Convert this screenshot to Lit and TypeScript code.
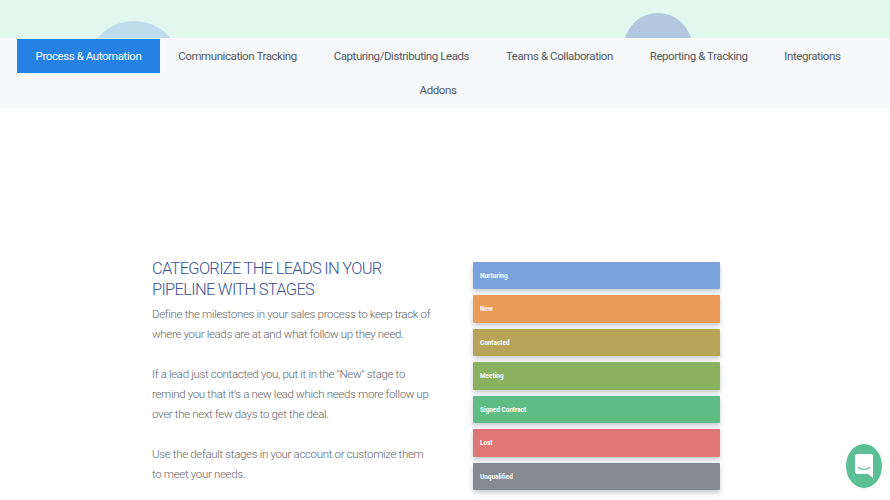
import { LitElement, html, css } from "lit";
import { customElement } from "lit/decorators.js";

const TABS = [
  "Process & Automation",
  "Communication Tracking",
  "Capturing/Distributing Leads",
  "Teams & Collaboration",
  "Reporting & Tracking",
  "Integrations",
  "Addons",
];
const STAGES: [string, string][] = [
  ["Nurturing", "#7aa3dc"],
  ["New", "#e99b57"],
  ["Contacted", "#b7a458"],
  ["Meeting", "#8ab15f"],
  ["Signed Contract", "#60bc85"],
  ["Lost", "#df7777"],
  ["Unqualified", "#848a8e"],
];

@customElement("app-root")
export class AppRoot extends LitElement {
  static styles = css`
    :host {
      display: block;
      height: 500px;
      overflow: hidden;
      position: relative;
      background: #fff;
      font-family: Roboto, "Liberation Sans", sans-serif;
    }
    .hero {
      height: 38px;
      background: #e2f8ee;
      position: relative;
      overflow: hidden;
    }
    .circle {
      position: absolute;
      border-radius: 50%;
    }
    .c1 {
      left: 87px;
      top: 21px;
      width: 94px;
      height: 94px;
      background: #bedcec;
    }
    .c2 {
      left: 624px;
      top: 13px;
      width: 68px;
      height: 68px;
      background: #b2c7e0;
    }
    nav {
      background: #f6f8fa;
      height: 70px;
      padding: 1px 30px 0 16px;
      box-sizing: border-box;
      display: flex;
      flex-wrap: wrap;
      justify-content: center;
      align-content: flex-start;
    }
    .tab {
      height: 34px;
      line-height: 34px;
      padding: 0 18.4px;
      font-size: 11.5px;
      letter-spacing: -0.42px;
      color: #53595f;
      white-space: nowrap;
    }
    .tab.active {
      background: #2581e3;
      color: #fff;
    }
    .tab.last {
      height: 35px;
      line-height: 35px;
    }
    .content {
      display: flex;
      align-items: flex-start;
      gap: 39px;
      padding: 150px 0 0 152px;
    }
    .text {
      width: 282px;
      flex: none;
    }
    h2 {
      margin: 0;
      font-size: 16.5px;
      line-height: 21px;
      font-weight: 300;
      letter-spacing: -0.72px;
      color: #3b5594;
      text-transform: uppercase;
    }
    p {
      margin: 4px 0 20px;
      font-size: 11.5px;
      font-weight: 300;
      letter-spacing: -0.33px;
      line-height: 20px;
      color: #5f656b;
    }
    .stages {
      width: 247px;
      display: flex;
      flex-direction: column;
      gap: 6px;
      padding-top: 3.7px;
    }
    .stage {
      height: 27.5px;
      line-height: 28.5px;
      padding-left: 7px;
      color: #fff;
      font-size: 6.4px;
      font-weight: 700;
      border-radius: 1px;
      box-shadow: 0 3px 5px rgba(70, 90, 110, 0.3);
    }
    .chat {
      position: absolute;
      left: 846px;
      top: 444px;
      width: 36px;
      height: 44px;
      border-radius: 50%;
      background: #5cbf95;
      display: flex;
      align-items: center;
      justify-content: center;
      box-shadow: 0 1px 6px rgba(0, 0, 0, 0.06);
    }
    .chat svg {
      display: block;
    }
  `;

  render() {
    return html`
      <div class="hero">
        <div class="circle c1"></div>
        <div class="circle c2"></div>
      </div>
      <nav>
        ${TABS.map(
          (t, i) =>
            html`<div class="tab ${i === 0 ? "active" : ""} ${i === 6 ? "last" : ""}">${t}</div>`
        )}
      </nav>
      <section class="content">
        <div class="text">
          <h2>Categorize the leads in your pipeline with stages</h2>
          <p>Define the milestones in your sales process to keep track of where your leads are at and what follow up they need.</p>
          <p>If a lead just contacted you, put it in the "New" stage to remind you that it's a new lead which needs more follow up over the next few days to get the deal.</p>
          <p>Use the default stages in your account or customize them to meet your needs.</p>
        </div>
        <div class="stages">
          ${STAGES.map(
            ([n, c]) => html`<div class="stage" style="background:${c}">${n}</div>`
          )}
        </div>
      </section>
      <div class="chat">
        <svg width="18" height="24" viewBox="0 0 18 24">
          <path d="M2 0H16A2 2 0 0 1 18 2V24L13 20H2A2 2 0 0 1 0 18V2A2 2 0 0 1 2 0Z" fill="#fff" />
          <path d="M3.500 13.500C6.500 16 11.500 16 14.500 13.500" fill="none" stroke="#5cbf95" stroke-width="1.200" stroke-linecap="round" />
        </svg>
      </div>
    `;
  }
}
